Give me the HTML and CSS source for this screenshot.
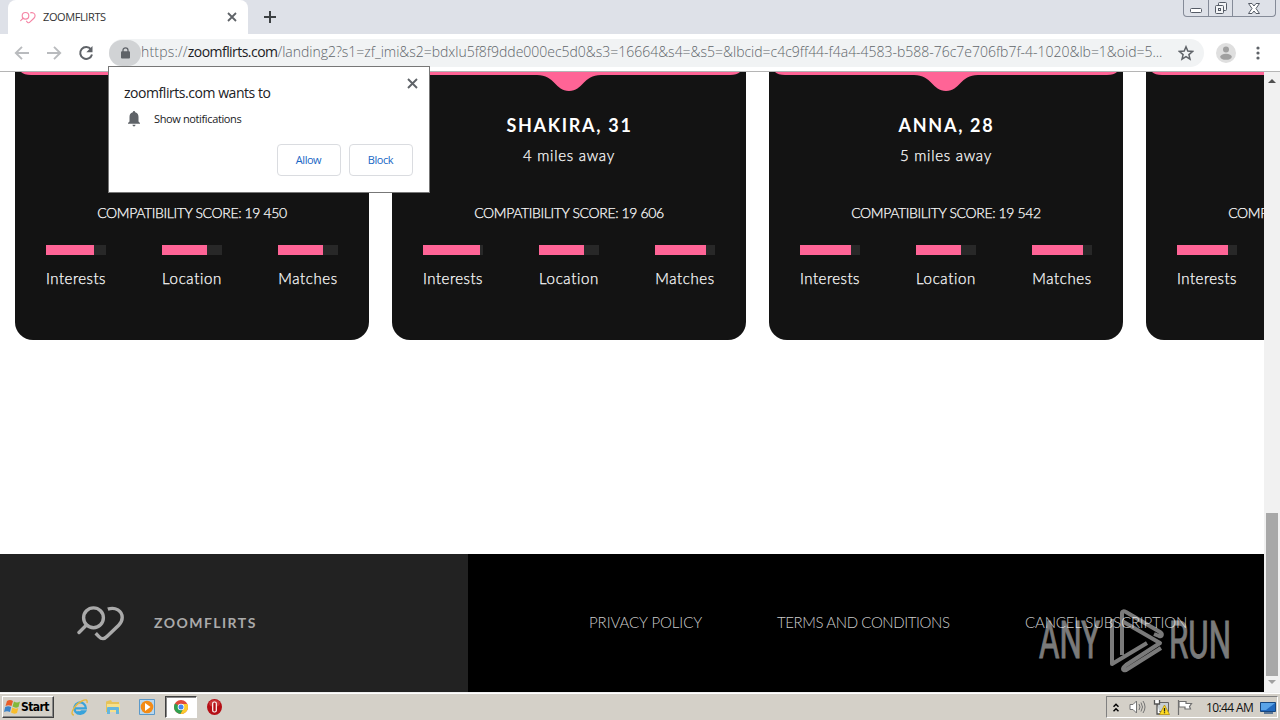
FILE: index.html
```html
<!DOCTYPE html>
<html lang="en">
<head>
<meta charset="utf-8">
<title>ZOOMFLIRTS</title>
<link rel="stylesheet" href="styles.css">
</head>
<body>
<svg class="defs" width="0" height="0">
  <symbol id="logo" viewBox="0 0 48 36"><g fill="none" stroke="currentColor" stroke-width="3.400"><circle cx="16.500" cy="12.800" r="9.900"/><path d="M9.500 20 2 27.500" stroke-linecap="round"/><path d="M30.800 4.200C38.500 1.500 45.200 6 45.200 12.500c0 3.500-1.300 5.500-3.500 7.700L30.200 31.300c-2.900 3-5.500 3.100-8.300.3L18.700 28.300"/></g></symbol>
  <symbol id="notch" viewBox="0 0 354 20"><path d="M6 0Q9 3 16 3H145C163 3 163 19 177 19S191 3 209 3H338Q345 3 348 0Z" fill="#ff6496"/></symbol>
</svg>
<header class="tabs">
  <div class="edge"></div>
  <div class="tab">
    <svg class="fav" width="16" height="13"><use href="#logo"/></svg>
    <span class="tab-title">ZOOMFLIRTS</span>
    <svg class="tab-x" width="10" height="10" viewBox="0 0 10 10"><path d="m1 1 8 8m0-8L1 9" stroke="#5f6368" stroke-width="1.8"/></svg>
  </div>
  <svg class="plus" width="12" height="12" viewBox="0 0 12 12"><path d="M6 0v12M0 6h12" stroke="#3c4043" stroke-width="2"/></svg>
  <div class="win">
    <span><svg width="12" height="5" viewBox="0 0 12 5"><rect x=".5" y=".5" width="11" height="4" rx="1" fill="#fff" stroke="#555b66"/></svg></span>
    <span><svg width="14" height="14" viewBox="0 0 14 14" fill="#f3f4f6" stroke="#555b66"><rect x="4.500" y="1.500" width="8" height="8" rx="1"/><rect x="1.500" y="4.500" width="8" height="8" rx="1"/><rect x="4.500" y="7.500" width="2" height="2"/></svg></span>
    <span><svg width="12" height="11" viewBox="0 0 12 11"><path d="M.5.500h3.500L6 3 8 .500h3.500L8 5.500l3.500 5H8L6 8l-2 2.500H.5l3.500-5Z" fill="#fff" stroke="#555b66"/></svg></span>
  </div>
</header>
<nav class="bar">
  <svg class="nav1" width="16" height="14" viewBox="0 0 16 14"><path d="M15 7H2M8 .8 1.800 7 8 13.200" fill="none" stroke="#b9bbbe" stroke-width="1.900"/></svg>
  <svg class="nav2" width="16" height="14" viewBox="0 0 16 14"><path d="M1 7h13M8 .8 14.200 7 8 13.200" fill="none" stroke="#b9bbbe" stroke-width="1.900"/></svg>
  <svg class="nav3" width="16" height="16" viewBox="0 0 16 16"><path d="M13 4.300A6 6 0 1 0 14 9.500" fill="none" stroke="#5f6368" stroke-width="2"/><path d="M14.500 1v6.200H8.300Z" fill="#5f6368"/></svg>
  <div class="omni">
    <div class="lock"><svg width="9" height="12" viewBox="0 0 9 12"><path d="M2 5V3.300a2.500 2.500 0 0 1 5 0V5" fill="none" stroke="#5f6368" stroke-width="1.300"/><rect y="4.300" width="9" height="7.200" rx="1" fill="#5f6368"/></svg></div>
    <div class="url"><span class="u1">https://</span><b>zoomflirts.com</b><span class="u2">/landing2?s1=zf_imi&amp;s2=bdxlu5f8f9dde000ec5d0&amp;s3=16664&amp;s4=&amp;s5=&amp;lbcid=c4c9ff44-f4a4-4583-b588-76c7e706fb7f-4-1020&amp;lb=1&amp;oid=5...</span></div>
    <svg class="star" width="16" height="16" viewBox="0 0 16 16"><path d="m8 1.800 1.800 4.300 4.700.4-3.600 3.100 1.100 4.600L8 11.700l-4 2.500 1.100-4.600-3.600-3.100 4.700-.4Z" fill="none" stroke="#5f6368" stroke-width="1.500"/></svg>
  </div>
  <svg class="user" width="20" height="20" viewBox="0 0 20 20"><circle cx="10" cy="10" r="10" fill="#dfdfdf"/><circle cx="10" cy="6.500" r="3" fill="#a0a0a0"/><ellipse cx="10" cy="13.800" rx="5.800" ry="3" fill="#a0a0a0"/></svg>
  <svg class="dots" width="4" height="14" viewBox="0 0 4 14" fill="#5f6368"><circle cx="2" cy="2" r="1.600"/><circle cx="2" cy="7" r="1.600"/><circle cx="2" cy="12" r="1.600"/></svg>
</nav>
<main class="view">
  <div class="page">
    <section class="cards">
      <article class="card">
        <svg class="notch" width="354" height="20"><use href="#notch"/></svg>
        <h2 class="name">&nbsp;</h2><p class="dist">&nbsp;</p>
        <p class="score">COMPATIBILITY SCORE: 19 450</p>
        <div class="stats"><div><i><em style="width:48px"></em></i><span>Interests</span></div><div><i><em style="width:45px"></em></i><span class="loc">Location</span></div><div><i><em style="width:45px"></em></i><span class="mat">Matches</span></div></div>
      </article>
      <article class="card">
        <svg class="notch" width="354" height="20"><use href="#notch"/></svg>
        <h2 class="name">SHAKIRA, 31</h2><p class="dist">4 miles away</p>
        <p class="score">COMPATIBILITY SCORE: 19 606</p>
        <div class="stats"><div><i><em style="width:57px"></em></i><span>Interests</span></div><div><i><em style="width:45px"></em></i><span class="loc">Location</span></div><div><i><em style="width:51px"></em></i><span class="mat">Matches</span></div></div>
      </article>
      <article class="card">
        <svg class="notch" width="354" height="20"><use href="#notch"/></svg>
        <h2 class="name">ANNA, 28</h2><p class="dist">5 miles away</p>
        <p class="score">COMPATIBILITY SCORE: 19 542</p>
        <div class="stats"><div><i><em style="width:51px"></em></i><span>Interests</span></div><div><i><em style="width:45px"></em></i><span class="loc">Location</span></div><div><i><em style="width:51px"></em></i><span class="mat">Matches</span></div></div>
      </article>
      <article class="card">
        <svg class="notch" width="354" height="20"><use href="#notch"/></svg>
        <h2 class="name">&nbsp;</h2><p class="dist">&nbsp;</p>
        <p class="score">COMPATIBILITY SCORE: 19 450</p>
        <div class="stats"><div><i><em style="width:51px"></em></i><span>Interests</span></div></div>
      </article>
    </section>
    <footer class="foot">
      <div class="brand"><svg width="48" height="36"><use href="#logo"/></svg><span>ZOOMFLIRTS</span></div>
      <div class="links"><a class="l1">PRIVACY POLICY</a><a class="l2">TERMS AND CONDITIONS</a><a class="l3">CANCEL SUBSCRIPTION</a></div>
    </footer>
    <svg class="mark" width="194" height="64" viewBox="0 0 194 64">
      <g fill="#fff" stroke="#fff" stroke-width=".9" font-family="Roboto" font-size="51"><text x="1" y="49" textLength="61" lengthAdjust="spacingAndGlyphs">ANY</text><text x="131" y="49" textLength="62" lengthAdjust="spacingAndGlyphs">RUN</text></g>
      <g fill="none" stroke="#fff" stroke-width="4" stroke-linejoin="round"><path d="M74 10v45l35-21"/><path d="M84 46V4c0-2 2-2 4-1l34 20c3 2 2 5-1 4l-5-2"/><path d="m84 12 38 22-34 22c-4 3-4 6 0 5l35-22"/></g>
    </svg>
  </div>
  <div class="scroll"><svg width="8" height="4" viewBox="0 0 8 4"><path d="m0 4 4-4 4 4Z" fill="#505050"/></svg><div class="thumb"></div><svg width="8" height="4" viewBox="0 0 8 4"><path d="m0 0 4 4 4-4Z" fill="#a0a0a0"/></svg></div>
</main>
<div class="dialog">
  <div class="d-title">zoomflirts.com wants to</div>
  <svg class="d-x" width="11" height="11" viewBox="0 0 11 11"><path d="m1 1 9 9m0-9-9 9" stroke="#5f6368" stroke-width="1.900"/></svg>
  <div class="d-row"><svg width="12" height="16" viewBox="0 0 12 16" fill="#5f6368"><path d="M6 0q1.200 0 1.200 1.300C9.700 2 10.500 4 10.500 6v4.500L12 12v.8H0V12l1.500-1.500V6c0-2 .8-4 3.300-4.700Q4.800 0 6 0Z"/><path d="M4.400 13.800h3.200q-.3 1.600-1.600 1.600t-1.600-1.600Z"/></svg><span>Show notifications</span></div>
  <div class="d-btns"><button>Allow</button><button>Block</button></div>
</div>
<footer class="task">
  <div class="start"><svg width="17" height="16" viewBox="0 0 17 16"><path d="M3 2q3-2 6 0L7.500 7q-3-1.500-6 0Z" fill="#e95d28"/><path d="M10 2.500q3 2 6 0L14.500 8q-3 1.500-6-.500Z" fill="#83b83a"/><path d="M1.200 8q3-1.500 6 0L6 13q-3-1.500-6 0Z" fill="#3c83c8"/><path d="M8.300 8.500q3 2 6 .500L13 14q-3 1.500-6-.500Z" fill="#f9bd2c"/></svg><b>Start</b></div>
  <svg class="ic ie" width="18" height="18" viewBox="0 0 18 18" fill="none"><path d="M4.500 9.300h10.400A5.800 5.800 0 1 0 14 12.300h-3.200q-2 2.200-4.500.4" stroke="#38a3db" stroke-width="2.200"/><path d="M3 16C-2 16 3 6 11 2q6-3 5 2" stroke="#e7b83f" stroke-width="1.400"/></svg>
  <svg class="ic fo" width="16" height="16" viewBox="0 0 16 16"><path d="M1 2.500 6 1l1 2h7v10H1Z" fill="#e6c35a"/><path d="M2 5h13v8H2Z" fill="#f7e08a"/><path d="M2 15V9q0-1 1-1h10q1 0 1 1v6h-3v-4H5v4Z" fill="#65b6dd"/></svg>
  <svg class="ic wm" width="16" height="16" viewBox="0 0 16 16"><path d="M.5.500h15v15H.5Z" fill="#b8d7ef" stroke="#5b99c9"/><circle cx="8" cy="8" r="6.300" fill="#f38b16"/><path d="m6 4 5.500 4L6 12Z" fill="#fff"/></svg>
  <div class="active"><svg width="14" height="14" viewBox="0 0 14 14"><circle cx="7" cy="7" r="7" fill="#e04a3a"/><path d="M7 7 1 3.500A7 7 0 0 0 6.500 14l3.500-6Z" fill="#2fa150"/><path d="M7 4h6.300A7 7 0 0 1 6.500 14l3-5.500Z" fill="#fbcb2c"/><circle cx="7" cy="7" r="3.300" fill="#fff"/><circle cx="7" cy="7" r="2.500" fill="#4486ef"/></svg></div>
  <svg class="ic op" width="15" height="16" viewBox="0 0 15 16"><ellipse cx="7.500" cy="8" rx="7.500" ry="8" fill="#b50f16"/><ellipse cx="7.500" cy="4.500" rx="5.500" ry="3.500" fill="#d95050" opacity=".6"/><rect x="5.700" y="3" width="3.600" height="10" rx="1.500" fill="#b50f16" stroke="#fff" stroke-width="1.200"/></svg>
  <div class="tray">
    <svg width="6" height="9" viewBox="0 0 6 9"><path d="m.5 3.700 2.500-2.500 2.500 2.500m-5 4.500L3 5.700l2.500 2.500" fill="none" stroke="#000" stroke-width="1.500"/></svg>
    <svg class="t2" width="17" height="14" viewBox="0 0 17 14" fill="#fff" stroke="#747474"><path d="M1 4.500h3L7.500 1v12L4 9.500H1Z"/><path d="M10 4q2 3 0 6M12 2.500q3 4.500 0 9M14 1q4 6 0 12" fill="none"/></svg>
    <svg class="t3" width="17" height="16" viewBox="0 0 17 16"><path d="M4.500 3.500h11v9h-11Z" fill="#c8cfd2" stroke="#666"/><path d="M1.500 1v4h5V1M4 5v10H7" fill="#fff" stroke="#555" stroke-width="1.300"/><path d="m11.500 6 5 9.500h-10Z" fill="#ffdc22" stroke="#ac8500" stroke-width=".7"/><path d="M11.500 9v3.500m0 .8v1" stroke="#222" stroke-width="1.300"/></svg>
    <svg class="t4" width="16" height="15" viewBox="0 0 16 15"><path d="M1.500 0v15M2 1.500h7v2h5.500l-2 3 1 2.500H8V7H2Z" fill="#fff" stroke="#707070" stroke-width="1.200"/></svg>
    <span class="clock">10:44 AM</span>
    <svg class="t5" width="16" height="13" viewBox="0 0 16 13"><path d="M.5 1.500h15v9H.5Z" fill="#2269bd" stroke="#17477f"/><path d="M1 2h14L6 9H1Z" fill="#5aa4e8"/><path d="M4 12h9" stroke="#355a86" stroke-width="1.500"/></svg>
  </div>
</footer>
</body>
</html>
```
FILE: styles.css
```css
*{box-sizing:border-box}
body{margin:0;width:1280px;height:720px;overflow:hidden;position:relative;display:flex;flex-direction:column;font-family:"Open Sans",sans-serif;background:#fff}
svg{display:block;flex:none}
.defs{position:absolute}
h2,p{margin:0}
.tabs{height:34px;background:#dee1e8;display:flex;align-items:flex-start;flex:none}
.edge{width:8px;height:34px}
.tab{width:240px;height:34px;background:#fff;border-radius:8px 8px 0 0;display:flex;align-items:center;padding-left:12px}
.fav{color:#f585a5}
.tab-title{font-size:11px;letter-spacing:-.4px;margin:-2px 0 0 7px;width:184px;color:#333;white-space:nowrap}
.plus{margin:11px 0 0 16px}
.win{margin-left:auto;margin-right:4px;width:93px;height:17px;border:1px solid #858b98;border-top:0;border-radius:0 0 4px 4px;display:flex}
.win span{width:25px;display:flex;align-items:center;justify-content:center;border-right:1px solid #858b98}
.win span:first-child{align-items:flex-end;padding-bottom:3px}
.win span:last-child{width:42px;border:0}
.bar{height:38px;flex:none;border-bottom:1px solid #b5b5b5;display:flex;align-items:center;background:#fff;padding-left:14px}
.nav2{margin-left:16px}.nav3{margin-left:16px}
.omni{margin-left:15px;width:1095px;height:28px;border-radius:14px;background:#f1f3f4;display:flex;align-items:center}
.lock{width:32px;height:26px;border-radius:13px;background:#d1d3d5;display:flex;align-items:center;justify-content:center}
.url{width:1036px;font-size:14px;font-weight:300;color:#60656a;white-space:nowrap;height:20px;line-height:18px}
.url b{font-weight:400;color:#202124;letter-spacing:-.55px}
.u1{letter-spacing:.18px}
.u2{letter-spacing:-.015px}
.star{margin-left:1px}
.user{margin-left:12px}.dots{margin-left:20px}
.view{height:620px;flex:none;display:flex}
.page{width:1264px;height:620px;position:relative;overflow:hidden;display:flex;flex-direction:column;justify-content:space-between}
.cards{display:flex;gap:23px;padding-left:15px;height:268px}
.card{width:354px;height:268px;flex:none;background:#131313;border-radius:0 0 18px 18px;color:#fff;font-family:Lato,sans-serif;text-align:center}
.name{font-size:18px;line-height:24px;margin-top:21px;padding-left:1px;letter-spacing:1.7px;font-weight:700}
.dist,.score,.stats span{font-weight:300;-webkit-text-stroke:.25px #fff}
.dist{font-size:15px;line-height:20px;margin-top:8px;letter-spacing:.75px}
.score{font-size:14px;line-height:18px;margin-top:39px;white-space:nowrap;letter-spacing:-.36px}
.stats{display:flex;gap:56px;margin:23px 0 0 31px;font-size:15px;line-height:18px;letter-spacing:.5px}
.stats div{width:60px}
.stats i{display:block;background:#282828;height:10px;margin-bottom:14px}
.stats em{display:block;background:#ff6496;height:10px}
.stats span{display:block;white-space:nowrap}
.stats .loc,.stats .mat{letter-spacing:.65px}
.foot{height:138px;display:flex;font-family:Lato,sans-serif}
.brand{width:468px;background:#222;padding:0 0 1px 77px;display:flex;align-items:center;color:#aaa;font-size:14px;letter-spacing:1.45px}
.brand span{margin-left:29px;font-weight:700}
.links{flex:1;background:#000;display:flex;align-items:center;padding:0 0 2px 121px;color:#ccc;font-size:15px;font-weight:300;white-space:nowrap}
.links a{flex:none}.l1{width:188px;letter-spacing:-.07px}.l2{width:248px;letter-spacing:-.4px}.l3{letter-spacing:-.17px}
.mark{position:absolute;left:1038px;top:537px;opacity:.48}
.scroll{width:16px;background:#f1f1f1;display:flex;flex-direction:column;align-items:center;padding:7px 0}
.thumb{width:12px;height:163px;background:#a8a8a8;margin:430px 0 4px}
.dialog{position:absolute;left:108px;top:66px;width:322px;height:127px;background:#fff;border:1px solid #777;padding:16px 16px 16px 15px;color:#202124}
.d-title{font-size:14px;line-height:19px;white-space:nowrap;letter-spacing:-.45px}
.d-x{position:absolute;right:11px;top:11px}
.d-row{display:flex;align-items:center;gap:14px;margin:8px 0 0 4px;height:18px;font-size:11px;letter-spacing:-.37px}
.d-row span{padding-bottom:2px}
.d-btns{display:flex;justify-content:flex-end;gap:8px;margin-top:16px}
.d-btns button{width:64px;height:32px;border:1px solid #dadce0;border-radius:4px;background:#fff;color:#1967c5;font:11px "Open Sans",sans-serif;letter-spacing:-.45px;padding:0 1px 2px 0}
.task{height:28px;flex:none;background:#d4d0c8;border-top:1px solid #eee;box-shadow:inset 0 1px #fff;display:flex;align-items:flex-start;padding:3px 0 0 2px}
.start{width:52px;height:22px;border:1px solid;border-color:#fff #404040 #404040 #fff;box-shadow:inset -1px -1px #888;display:flex;align-items:center;padding-left:1px;font:12px "DejaVu Sans Condensed","DejaVu Sans",sans-serif;letter-spacing:-.6px}
.ic{margin-top:3px}
.ie{margin-left:17px}.fo{margin-left:16px}.wm{margin-left:18px}
.active{width:32px;height:22px;background:#fff;border:1px solid;border-color:#404040 #fff #fff #404040;box-shadow:inset 1px 1px #888;margin-left:10px;display:flex;align-items:center;justify-content:center}
.op{margin-left:10px}
.tray{margin-left:auto;margin-right:2px;width:172px;height:22px;border:1px solid;border-color:#808080 #fff #fff #808080;display:flex;align-items:center;padding-left:6px}
.t2{margin-left:10px}.t3{margin-left:7px}.t4{margin-left:7px}
.clock{margin-left:13px;width:54px;font-size:12px;letter-spacing:-.6px;white-space:nowrap;color:#111}
```
